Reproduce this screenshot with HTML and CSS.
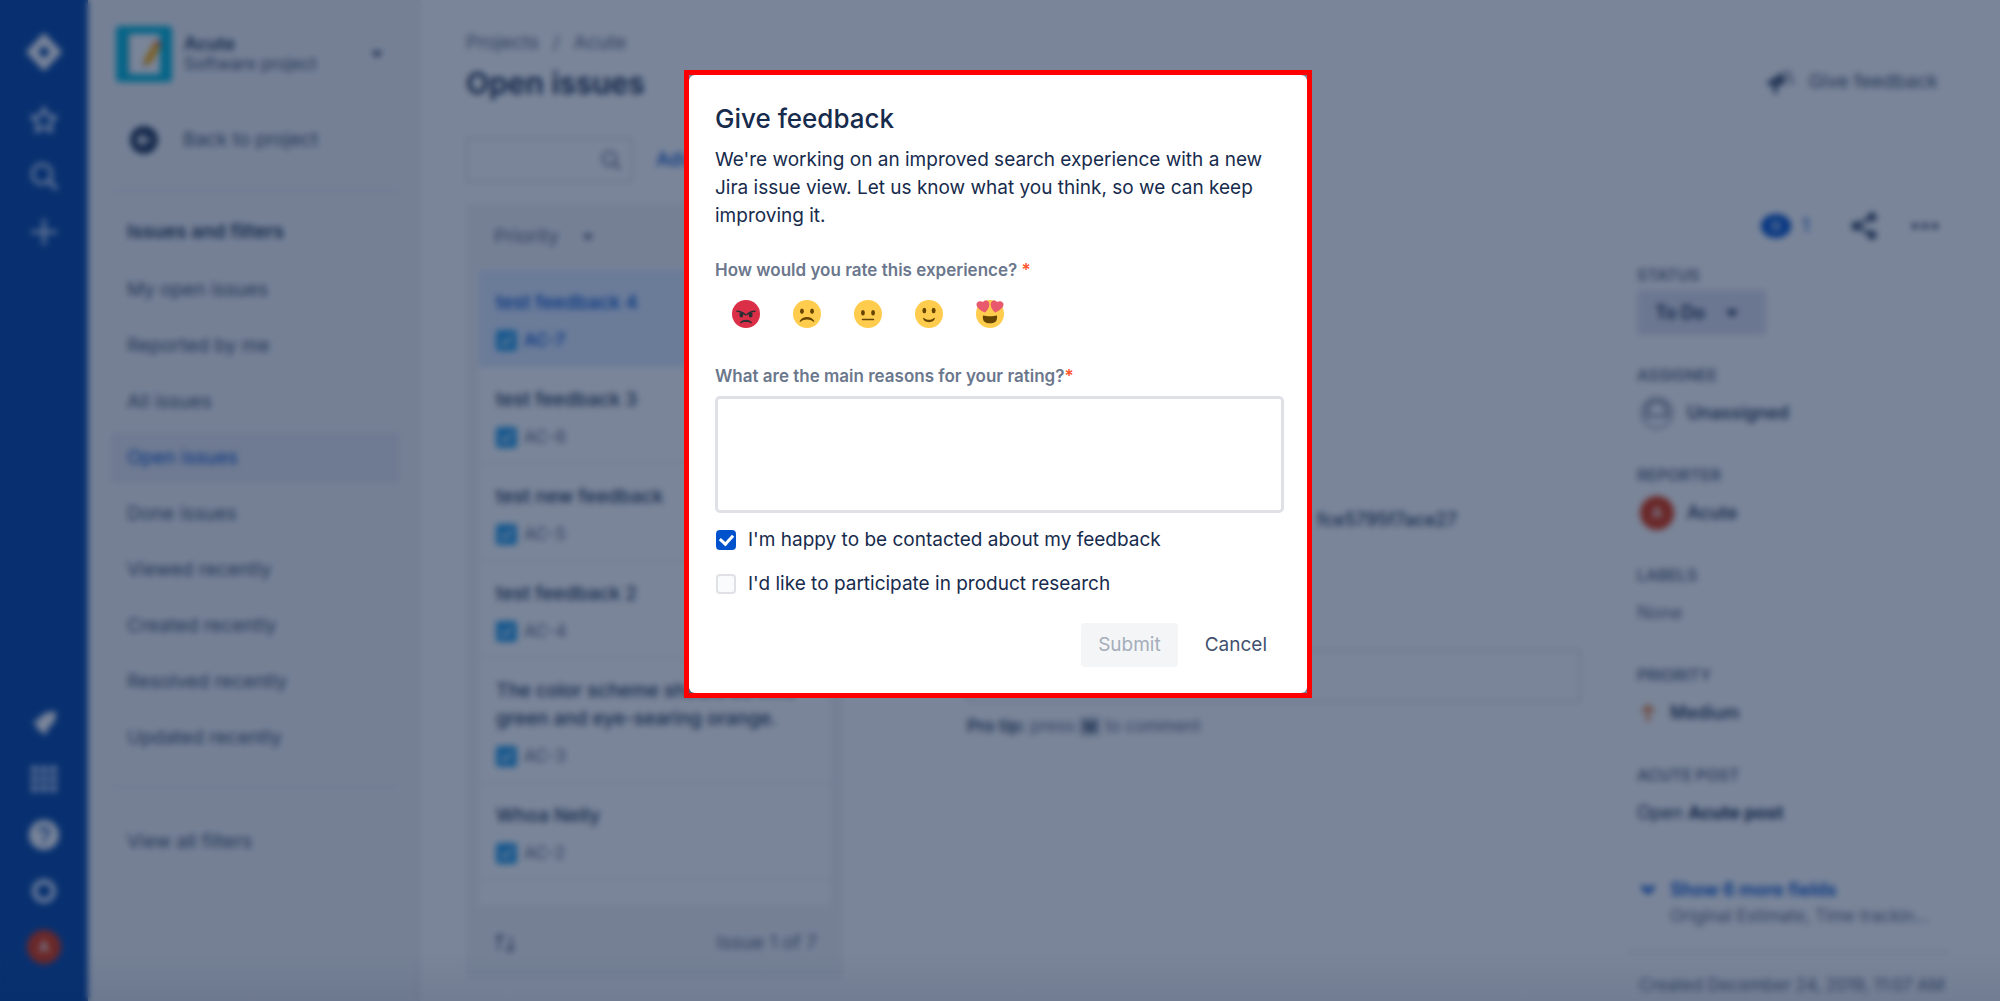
FILE: index.html
```html
<!DOCTYPE html>
<html lang="en">
<head>
<meta charset="utf-8">
<meta name="viewport" content="width=device-width, initial-scale=1">
<title>Open issues - Acute</title>
<link rel="stylesheet" href="styles.css">
</head>
<body>
<svg class="sprite" aria-hidden="true">
  <symbol id="i-caret" viewBox="0 0 14 8"><path d="M1 1h12L7 8z" fill="currentColor"/></symbol>
  <symbol id="i-task" viewBox="0 0 21 21"><rect width="21" height="21" rx="3" fill="#2b9fe8"/><path d="M5.500 11l3.500 3.500 6.500-8" fill="none" stroke="#fff" stroke-width="2"/></symbol>
  <symbol id="i-search" viewBox="0 0 28 28"><circle cx="12" cy="12" r="9.500" fill="none" stroke="currentColor" stroke-width="3"/><path d="M19 19l7 7" stroke="currentColor" stroke-width="3.500" stroke-linecap="round"/></symbol>
</svg>

<div class="app">
  <nav class="rail" aria-label="Global">
    <div class="rail-group">
      <a class="rail-item rail-logo" href="#" aria-label="Jira"><svg width="38" height="38" viewBox="0 0 38 38"><path d="M19 0l18 19-18 19L1 19z" fill="#fff"/><path d="M19 12.500l6 6.500-6 6.500-6-6.500z" fill="#0747a6"/></svg></a>
      <a class="rail-item" href="#" aria-label="Starred"><svg width="30" height="30" viewBox="0 0 30 30"><path d="M15 3l3.700 7.800 8.500 1.100-6.200 5.900 1.600 8.600L15 22.200l-7.600 4.200L9 17.800l-6.200-5.900 8.500-1.100z" fill="none" stroke="#deebff" stroke-width="3" stroke-linejoin="round"/></svg></a>
      <a class="rail-item" href="#" aria-label="Search"><svg width="28" height="28"><use href="#i-search"/></svg></a>
      <a class="rail-item" href="#" aria-label="Create"><svg width="28" height="28" viewBox="0 0 28 28"><path d="M14 1v26M1 14h26" stroke="#deebff" stroke-width="3"/></svg></a>
    </div>
    <div class="rail-group">
      <a class="rail-item" href="#" aria-label="What's new"><svg width="28" height="28" viewBox="0 0 28 28"><path d="M26 3C18 2 12 5 9 10l-6 3 4 4 1 4 4 2 4 3 2-7c6-4 8-9 8-16z" fill="#fff"/></svg></a>
      <a class="rail-item" href="#" aria-label="Apps"><svg width="26" height="26" viewBox="0 0 26 26"><path d="M0 0h7v7H0zM9.500 0h7v7h-7zM19 0h7v7h-7zM0 9.500h7v7H0zM9.500 9.500h7v7h-7zM19 9.500h7v7h-7zM0 19h7v7H0zM9.500 19h7v7h-7zM19 19h7v7h-7z" fill="#b3cbf0"/></svg></a>
      <a class="rail-item" href="#" aria-label="Help"><svg width="30" height="30" viewBox="0 0 30 30"><circle cx="15" cy="15" r="15" fill="#fff"/><path d="M10.500 12a4.500 4.500 0 1 1 6.500 4c-1.500.8-2 1.500-2 3" fill="none" stroke="#0747a6" stroke-width="2.500"/><circle cx="15" cy="22.500" r="1.600" fill="#0747a6"/></svg></a>
      <a class="rail-item" href="#" aria-label="Settings"><svg width="28" height="28" viewBox="0 0 28 28"><circle cx="14" cy="14" r="9.500" fill="none" stroke="#deebff" stroke-width="5"/></svg></a>
      <a class="rail-item" href="#" aria-label="Your profile"><span class="avatar">A</span></a>
    </div>
  </nav>

  <aside class="sidebar">
    <div class="project">
      <svg class="project-icon" width="56" height="56" viewBox="0 0 56 56"><rect width="56" height="56" rx="4" fill="#00b8d9"/><path d="M13 8h31v40H13z" fill="#fff"/><path d="M13 8v40" stroke="#b3bac5" stroke-width="2"/><path d="M27 41l2-9 9-15 6 4-8 15z" fill="#ffab00"/><path d="M38 17l2-3 6 4-2 3z" fill="#ff5630"/><path d="M27 41l1-4 2 2z" fill="#42526e"/></svg>
      <div class="project-text"><strong>Acute</strong><span>Software project</span></div>
      <svg class="project-caret" width="14" height="8"><use href="#i-caret"/></svg>
    </div>
    <a class="back" href="#"><svg width="28" height="28" viewBox="0 0 28 28"><circle cx="14" cy="14" r="14" fill="#253858"/><path d="M21 14H9M14 8.500L8.500 14l5.500 5.500" fill="none" stroke="#fff" stroke-width="3"/></svg>Back to project</a>
    <hr class="rule">
    <h2 class="side-title">Issues and filters</h2>
    <ul class="side-list">
      <li><a href="#">My open issues</a></li>
      <li><a href="#">Reported by me</a></li>
      <li><a href="#">All issues</a></li>
      <li><a class="is-active" href="#">Open issues</a></li>
      <li><a href="#">Done issues</a></li>
      <li><a href="#">Viewed recently</a></li>
      <li><a href="#">Created recently</a></li>
      <li><a href="#">Resolved recently</a></li>
      <li><a href="#">Updated recently</a></li>
    </ul>
    <hr class="rule">
    <ul class="side-list side-list-end"><li><a href="#">View all filters</a></li></ul>
  </aside>

  <main class="main">
    <header class="page-head">
      <div>
        <div class="crumbs"><a href="#">Projects</a><span>/</span><a href="#">Acute</a></div>
        <h1>Open issues</h1>
      </div>
      <button class="feedback-btn" type="button"><svg width="28" height="28" viewBox="0 0 28 28"><path d="M1 14L17 4l3 12-8 1-1 9H8l-1-8-5-1z" fill="currentColor"/><path d="M21 2l6 14" stroke="currentColor" stroke-width="2"/></svg>Give feedback</button>
    </header>
    <div class="filters">
      <div class="search-box"><input type="text" aria-label="Search issues"><svg width="20" height="20"><use href="#i-search"/></svg></div>
      <a class="blue-link" href="#">Advanced search</a>
    </div>

    <div class="columns">
      <section class="issues">
        <button class="sort" type="button">Priority<svg width="14" height="8"><use href="#i-caret"/></svg></button>
        <ul class="cards">
          <li class="card is-selected"><a href="#">test feedback 4</a><span class="key"><svg width="21" height="21"><use href="#i-task"/></svg>AC-7</span></li>
          <li class="card"><a href="#">test feedback 3</a><span class="key"><svg width="21" height="21"><use href="#i-task"/></svg>AC-6</span></li>
          <li class="card"><a href="#">test new feedback</a><span class="key"><svg width="21" height="21"><use href="#i-task"/></svg>AC-5</span></li>
          <li class="card"><a href="#">test feedback 2</a><span class="key"><svg width="21" height="21"><use href="#i-task"/></svg>AC-4</span></li>
          <li class="card"><a href="#">The color scheme should be lime green and eye-searing orange.</a><span class="key"><svg width="21" height="21"><use href="#i-task"/></svg>AC-3</span></li>
          <li class="card"><a href="#">Whoa Nelly</a><span class="key"><svg width="21" height="21"><use href="#i-task"/></svg>AC-2</span></li>
        </ul>
        <footer class="issues-foot"><svg width="20" height="20" viewBox="0 0 20 20"><path d="M4 17V3h5M1 6l3-4 3 4M16 3v14h-5M19 14l-3 4-3-4" fill="none" stroke="currentColor" stroke-width="2"/></svg><span>Issue 1 of 7</span></footer>
      </section>

      <section class="detail">
        <p class="hash">fce5795f7ace27</p>
        <input class="comment" type="text" aria-label="Add a comment">
        <p class="tip"><strong>Pro tip:</strong> press <kbd>M</kbd> to comment</p>
      </section>

      <aside class="fields">
        <div class="actions">
          <button class="watch" type="button" aria-label="Watchers"><svg width="30" height="26" viewBox="0 0 30 26"><ellipse cx="15" cy="13" rx="15" ry="12" fill="#0052cc"/><circle cx="15" cy="13" r="4" fill="none" stroke="#fff" stroke-width="2"/></svg>1</button>
          <button type="button" aria-label="Share"><svg width="28" height="28" viewBox="0 0 28 28"><path d="M22 5L6 14l16 9" fill="none" stroke="currentColor" stroke-width="3"/><circle cx="22" cy="5" r="4.500" fill="currentColor"/><circle cx="6" cy="14" r="4.500" fill="currentColor"/><circle cx="22" cy="23" r="4.500" fill="currentColor"/></svg></button>
          <button type="button" aria-label="More"><svg width="28" height="8" viewBox="0 0 28 8"><circle cx="4" cy="4" r="3" fill="currentColor"/><circle cx="14" cy="4" r="3" fill="currentColor"/><circle cx="24" cy="4" r="3" fill="currentColor"/></svg></button>
        </div>
        <dl class="field-list">
          <div><dt>STATUS</dt><dd class="dd-status"><button class="status" type="button">To Do<svg width="14" height="8"><use href="#i-caret"/></svg></button></dd></div>
          <div><dt>ASSIGNEE</dt><dd class="person"><svg width="34" height="34" viewBox="0 0 34 34"><circle cx="17" cy="17" r="15" fill="none" stroke="#8993a4" stroke-width="2"/><path d="M5 20V10l6-6h12l6 6v10h-5v-8l-4-4h-6l-4 4v8z" fill="#a5adba"/><path d="M5 20h24" stroke="#8993a4" stroke-width="3"/></svg>Unassigned</dd></div>
          <div><dt>REPORTER</dt><dd class="person"><span class="avatar">A</span>Acute</dd></div>
          <div><dt>LABELS</dt><dd class="none">None</dd></div>
          <div><dt>PRIORITY</dt><dd class="level"><svg width="14" height="18" viewBox="0 0 14 18"><path d="M7 18V2M1 8l6-6 6 6" fill="none" stroke="#e97f33" stroke-width="3"/></svg>Medium</dd></div>
          <div><dt>ACUTE POST</dt><dd>Open&nbsp;<strong>Acute post</strong></dd></div>
        </dl>
        <button class="more" type="button"><svg width="16" height="12" viewBox="0 0 16 12"><path d="M2 2l6 6 6-6" fill="none" stroke="currentColor" stroke-width="4"/></svg><span class="more-title">Show 6 more fields</span><span class="more-sub">Original Estimate, Time trackin...</span></button>
        <p class="created">Created December 24, 2019, 11:07 AM</p>
      </aside>
    </div>
  </main>
</div>

<div class="blanket">
  <div class="frame">
    <form class="dialog" role="dialog" aria-labelledby="dialog-title">
      <h2 id="dialog-title">Give feedback</h2>
      <p class="intro">We're working on an improved search experience with a new Jira issue view. Let us know what you think, so we can keep improving it.</p>
      <fieldset class="rating">
        <legend>How would you rate this experience? <span class="req">*</span></legend>
        <div class="faces">
          <label><input type="radio" name="rating" aria-label="Angry"><svg width="28" height="28" viewBox="0 0 36 36"><circle cx="18" cy="18" r="18" fill="#da2f47"/><g fill="#292f33"><ellipse cx="12" cy="19" rx="2.500" ry="3.500"/><ellipse cx="24" cy="19" rx="2.500" ry="3.500"/><path d="M25.500 29C24 26.500 21.500 25.500 18 25.500S12 26.500 10.500 29c-.5.800.2 1.300.8.900C13 28.700 15 28.200 18 28.200s5 .5 6.700 1.700c.6.400 1.300-.1.800-.9z"/><path d="M6.500 14.500c3.500 0 7 1 10.500 4.500" fill="none" stroke="#292f33" stroke-width="2" stroke-linecap="round"/><path d="M29.500 14.500c-3.500 0-7 1-10.500 4.500" fill="none" stroke="#292f33" stroke-width="2" stroke-linecap="round"/></g></svg></label>
          <label><input type="radio" name="rating" aria-label="Sad"><svg width="28" height="28" viewBox="0 0 36 36"><circle cx="18" cy="18" r="18" fill="#ffcc4d"/><g fill="#664500"><ellipse cx="11.500" cy="14.500" rx="2.500" ry="3.500"/><ellipse cx="24.500" cy="14.500" rx="2.500" ry="3.500"/><path d="M8.700 26.900C10.500 23.800 14 22 18 22s7.500 1.800 9.300 4.900c.5.900-.4 1.600-1.200 1C24 26 21.500 25 18 25s-6 1-8.100 2.900c-.8.600-1.700-.1-1.200-1z"/></g></svg></label>
          <label><input type="radio" name="rating" aria-label="Neutral"><svg width="28" height="28" viewBox="0 0 36 36"><circle cx="18" cy="18" r="18" fill="#ffcc4d"/><g fill="#664500"><ellipse cx="11.500" cy="16.500" rx="2.500" ry="3.500"/><ellipse cx="24.500" cy="16.500" rx="2.500" ry="3.500"/><rect x="10" y="24" width="16" height="2" rx="1"/></g></svg></label>
          <label><input type="radio" name="rating" aria-label="Happy"><svg width="28" height="28" viewBox="0 0 36 36"><circle cx="18" cy="18" r="18" fill="#ffcc4d"/><g fill="#664500"><ellipse cx="12" cy="13.500" rx="2.500" ry="3.500"/><ellipse cx="24" cy="13.500" rx="2.500" ry="3.500"/><path d="M10.500 23.500c.2 3 3.400 5 7.500 5s7.300-2 7.500-5c0-.8-.8-.9-1.200-.4-1.300 1.500-3.300 2.400-6.300 2.400s-5-.9-6.300-2.400c-.4-.5-1.200-.4-1.200.4z"/></g></svg></label>
          <label><input type="radio" name="rating" aria-label="Love it"><svg width="28" height="28" viewBox="0 0 36 36"><circle cx="18" cy="18" r="18" fill="#ffcc4d"/><path d="M18 21c-3.600 0-6-.4-9-1 0 0-1 6 2 8 2 1.500 4 2 7 2s5-.5 7-2c3-2 2-8 2-8-3 .6-5.400 1-9 1z" fill="#664500"/><path d="M16.700 3.100c-1.700-3-5.500-3.300-7.400-.6C6.200.9 2.300 1.300.9 4.200-.6 9.300 5 13.500 11.500 16c4-3.500 6.700-8 5.200-12.900zM19.300 3.100c1.700-3 5.500-3.300 7.400-.6 3.100-1.600 7-1.200 8.400 1.700C36.600 9.300 31 13.500 24.500 16c-4-3.500-6.700-8-5.200-12.900z" fill="#e9596e"/></svg></label>
        </div>
      </fieldset>
      <label class="q" for="reasons">What are the main reasons for your rating?<span class="req">*</span></label>
      <textarea id="reasons"></textarea>
      <label class="check"><input type="checkbox" checked>I'm happy to be contacted about my feedback</label>
      <label class="check"><input type="checkbox">I'd like to participate in product research</label>
      <div class="buttons">
        <button class="submit" type="submit" disabled>Submit</button>
        <button class="cancel" type="button">Cancel</button>
      </div>
    </form>
  </div>
</div>
</body>
</html>
```
FILE: styles.css
```css
* { box-sizing: border-box; }
html, body { height: 100%; }
body {
  margin: 0;
  overflow: hidden;
  font: 400 19px/24px Inter, "Liberation Sans", sans-serif;
  color: #253858;
  background: #fff;
}
h1, h2, p, ul, dl, dd { margin: 0; padding: 0; }
ul { list-style: none; }
a { color: inherit; text-decoration: none; }
button {
  font: inherit;
  color: inherit;
  background: none;
  border: 0;
  padding: 0;
}
svg { display: block; flex: none; }
.sprite { position: absolute; width: 0; height: 0; }

.app { display: flex; height: 100%; overflow: hidden; }

/* Global rail */
.rail {
  flex: none;
  width: 88px;
  display: flex;
  flex-direction: column;
  justify-content: space-between;
  padding: 24px 0 26px;
  background: #0747a6;
  color: #deebff;
}
.rail-item { display: grid; place-items: center; height: 56px; }
.rail-logo { margin-bottom: 12px; }
.avatar {
  display: grid;
  place-items: center;
  width: 34px;
  height: 34px;
  border-radius: 50%;
  background: #de350b;
  color: #fff;
  font-size: 14px;
  font-weight: 600;
}

/* Project sidebar */
.sidebar {
  flex: none;
  width: 332px;
  padding: 26px 17px 0 22px;
  background: #f4f5f7;
  border-right: 3px solid #ebecf0;
  color: #42526e;
}
.project { display: flex; align-items: center; gap: 12px; padding: 0 16px 0 6px; }
.project-text { flex: 1; display: flex; flex-direction: column; font-size: 17px; line-height: 20px; }
.project-text strong { font-size: 18px; font-weight: 600; color: #253858; }
.back { display: flex; align-items: center; gap: 25px; height: 56px; margin-top: 30px; padding-left: 20px; }
.rule { height: 2px; border: 0; margin: 22px 0; background: #dfe1e6; }
.side-title { font-size: 19px; line-height: 36px; font-weight: 600; padding-left: 17px; color: #253858; }
.side-list { margin-top: 14px; }
.side-list a { display: flex; align-items: center; height: 52px; margin-bottom: 4px; padding-left: 17px; border-radius: 4px; }
.side-list .is-active { background: #e8e9f0; color: #0052cc; }
.side-list-end { margin-top: 28px; }

/* Main */
.main { flex: 1; min-width: 0; padding: 31px 50px 0 46px; }
.page-head { display: flex; justify-content: space-between; }
.crumbs { display: flex; gap: 14px; color: #5e6c84; }
h1 { margin-top: 8px; font-size: 30px; line-height: 40px; font-weight: 600; color: #172b4d; }
.feedback-btn { align-self: flex-start; display: flex; align-items: center; gap: 14px; margin-top: 37px; padding-right: 12px; color: #42526e; }
.filters { display: flex; align-items: center; gap: 23px; margin-top: 34px; }
.search-box { display: flex; align-items: center; width: 167px; height: 46px; padding-right: 10px; border: 2px solid #dfe1e6; border-radius: 4px; color: #6b778c; }
.search-box input { flex: 1; min-width: 0; border: 0; background: none; }
.blue-link { color: #0052cc; font-weight: 500; }

.columns { display: flex; align-items: flex-start; margin-top: 20px; }
.issues { flex: none; width: 377px; padding: 0 13px; background: #f4f5f7; border-radius: 6px; color: #5e6c84; }
.sort { display: flex; align-items: center; gap: 22px; height: 67px; padding-left: 15px; }
.cards { height: 635px; background: #fff; }
.card { padding: 19px 17px 16px; border-bottom: 1px solid #dfe1e6; }
.card a { display: block; line-height: 28px; font-weight: 500; color: #253858; }
.key { display: flex; align-items: center; gap: 7px; height: 20px; margin-top: 13px; font-size: 17px; }
.is-selected { background: #deebff; }
.is-selected a, .is-selected .key { color: #0052cc; font-weight: 500; }
.issues-foot { display: flex; justify-content: space-between; align-items: center; height: 75px; padding: 0 13px 0 16px; }

.detail { flex: 1; padding: 305px 46px 0 124px; }
.hash { text-align: right; padding-right: 124px; font-size: 18px; font-weight: 500; }
.comment { display: block; width: 100%; height: 54px; margin-top: 117px; border: 2px solid #dfe1e6; border-radius: 4px; background: #fff; }
.tip { margin-top: 11px; font-size: 17px; color: #5e6c84; }
.tip strong { color: #344563; font-weight: 600; }
kbd { padding: 1px 4px; border-radius: 3px; background: #c1c7d0; color: #344563; font: 600 14px/18px Inter, sans-serif; }

.fields { flex: none; width: 323px; font-size: 18px; }
.actions { display: flex; align-items: center; justify-content: flex-end; gap: 33px; height: 45px; padding-right: 11px; color: #344563; }
.watch { display: flex; align-items: center; gap: 11px; margin-right: 8px; color: #0052cc; }
.field-list { padding: 15px 10px 0; }
.field-list > div { height: 100px; }
dt { font-size: 16px; line-height: 24px; font-weight: 600; color: #5e6c84; }
dd { display: flex; align-items: center; height: 45px; margin-top: 3px; color: #172b4d; }
.person, .level { font-weight: 500; }
.person { padding-left: 3px; gap: 13px; }
.level { padding-left: 4px; gap: 15px; }
.none { color: #5e6c84; }
.status { display: flex; align-items: center; gap: 20px; height: 45px; padding: 0 27px 0 18px; border-radius: 4px; background: #dfe1ee; font-weight: 600; }
.more { display: grid; grid-template-columns: 16px 1fr; column-gap: 14px; align-items: center; width: 100%; padding: 13px 13px 23px; text-align: left; color: #0052cc; border-bottom: 2px solid #dfe1e6; }
.more-title { font-weight: 600; line-height: 28px; }
.more-sub { grid-column: 2; font-size: 17px; color: #5e6c84; white-space: nowrap; }
.created { padding: 20px 12px 0; font-size: 17px; color: #5e6c84; white-space: nowrap; }

/* Modal */
.blanket {
  position: fixed;
  inset: 0;
  display: flex;
  justify-content: center;
  align-items: flex-start;
  padding: 70px 4px 0 0;
  background: linear-gradient(to top, rgba(9, 30, 66, .08), rgba(9, 30, 66, 0) 50px), rgba(9, 30, 66, .54);
  backdrop-filter: blur(3px);
}
.frame { width: 628px; border: 5px solid #f00; }
.dialog { padding: 27px 23px 26px 26px; border-radius: 6px; background: #fff; color: #172b4d; font-size: 19px; }
.dialog h2 { font-size: 26px; line-height: 34px; font-weight: 500; }
.intro { margin-top: 10px; line-height: 28px; }
.rating { margin: 0; padding: 0; border: 0; }
.rating legend, .q { display: block; padding: 0; font-size: 17px; line-height: 24px; font-weight: 600; color: #6b778c; }
.rating legend { padding-top: 28px; }
.req { color: #ff5630; }
.faces { display: flex; gap: 33px; padding: 18px 17px 0; }
.faces label { display: grid; }
.faces input { grid-area: 1 / 1; appearance: none; margin: 0; width: 28px; height: 28px; }
.faces svg { grid-area: 1 / 1; }
.q { margin-top: 36px; }
textarea { display: block; width: 100%; height: 117px; margin: 8px 0 13px; border: 3px solid #dfe1e6; border-radius: 5px; resize: none; background: #fff; font: inherit; }
.check { display: flex; align-items: center; gap: 12px; height: 28px; margin-bottom: 16px; padding-left: 1px; color: #172b4d; }
.check input { appearance: none; display: grid; place-items: center; width: 20px; height: 20px; margin: 0; border: 2px solid #dfe1e6; border-radius: 4px; background: #fafbfc; }
.check input:checked { background: #0052cc; border-color: #0052cc; }
.check input:checked::after { content: ""; width: 6px; height: 10px; margin-top: -3px; border: solid #fff; border-width: 0 3px 3px 0; rotate: 42deg; }
.buttons { display: flex; justify-content: flex-end; gap: 10px; margin-top: 25px; }
.buttons button { height: 44px; padding: 0 17px; border-radius: 4px; color: #42526e; }
.buttons .submit { background: #f4f5f7; color: #a5adba; }
```
